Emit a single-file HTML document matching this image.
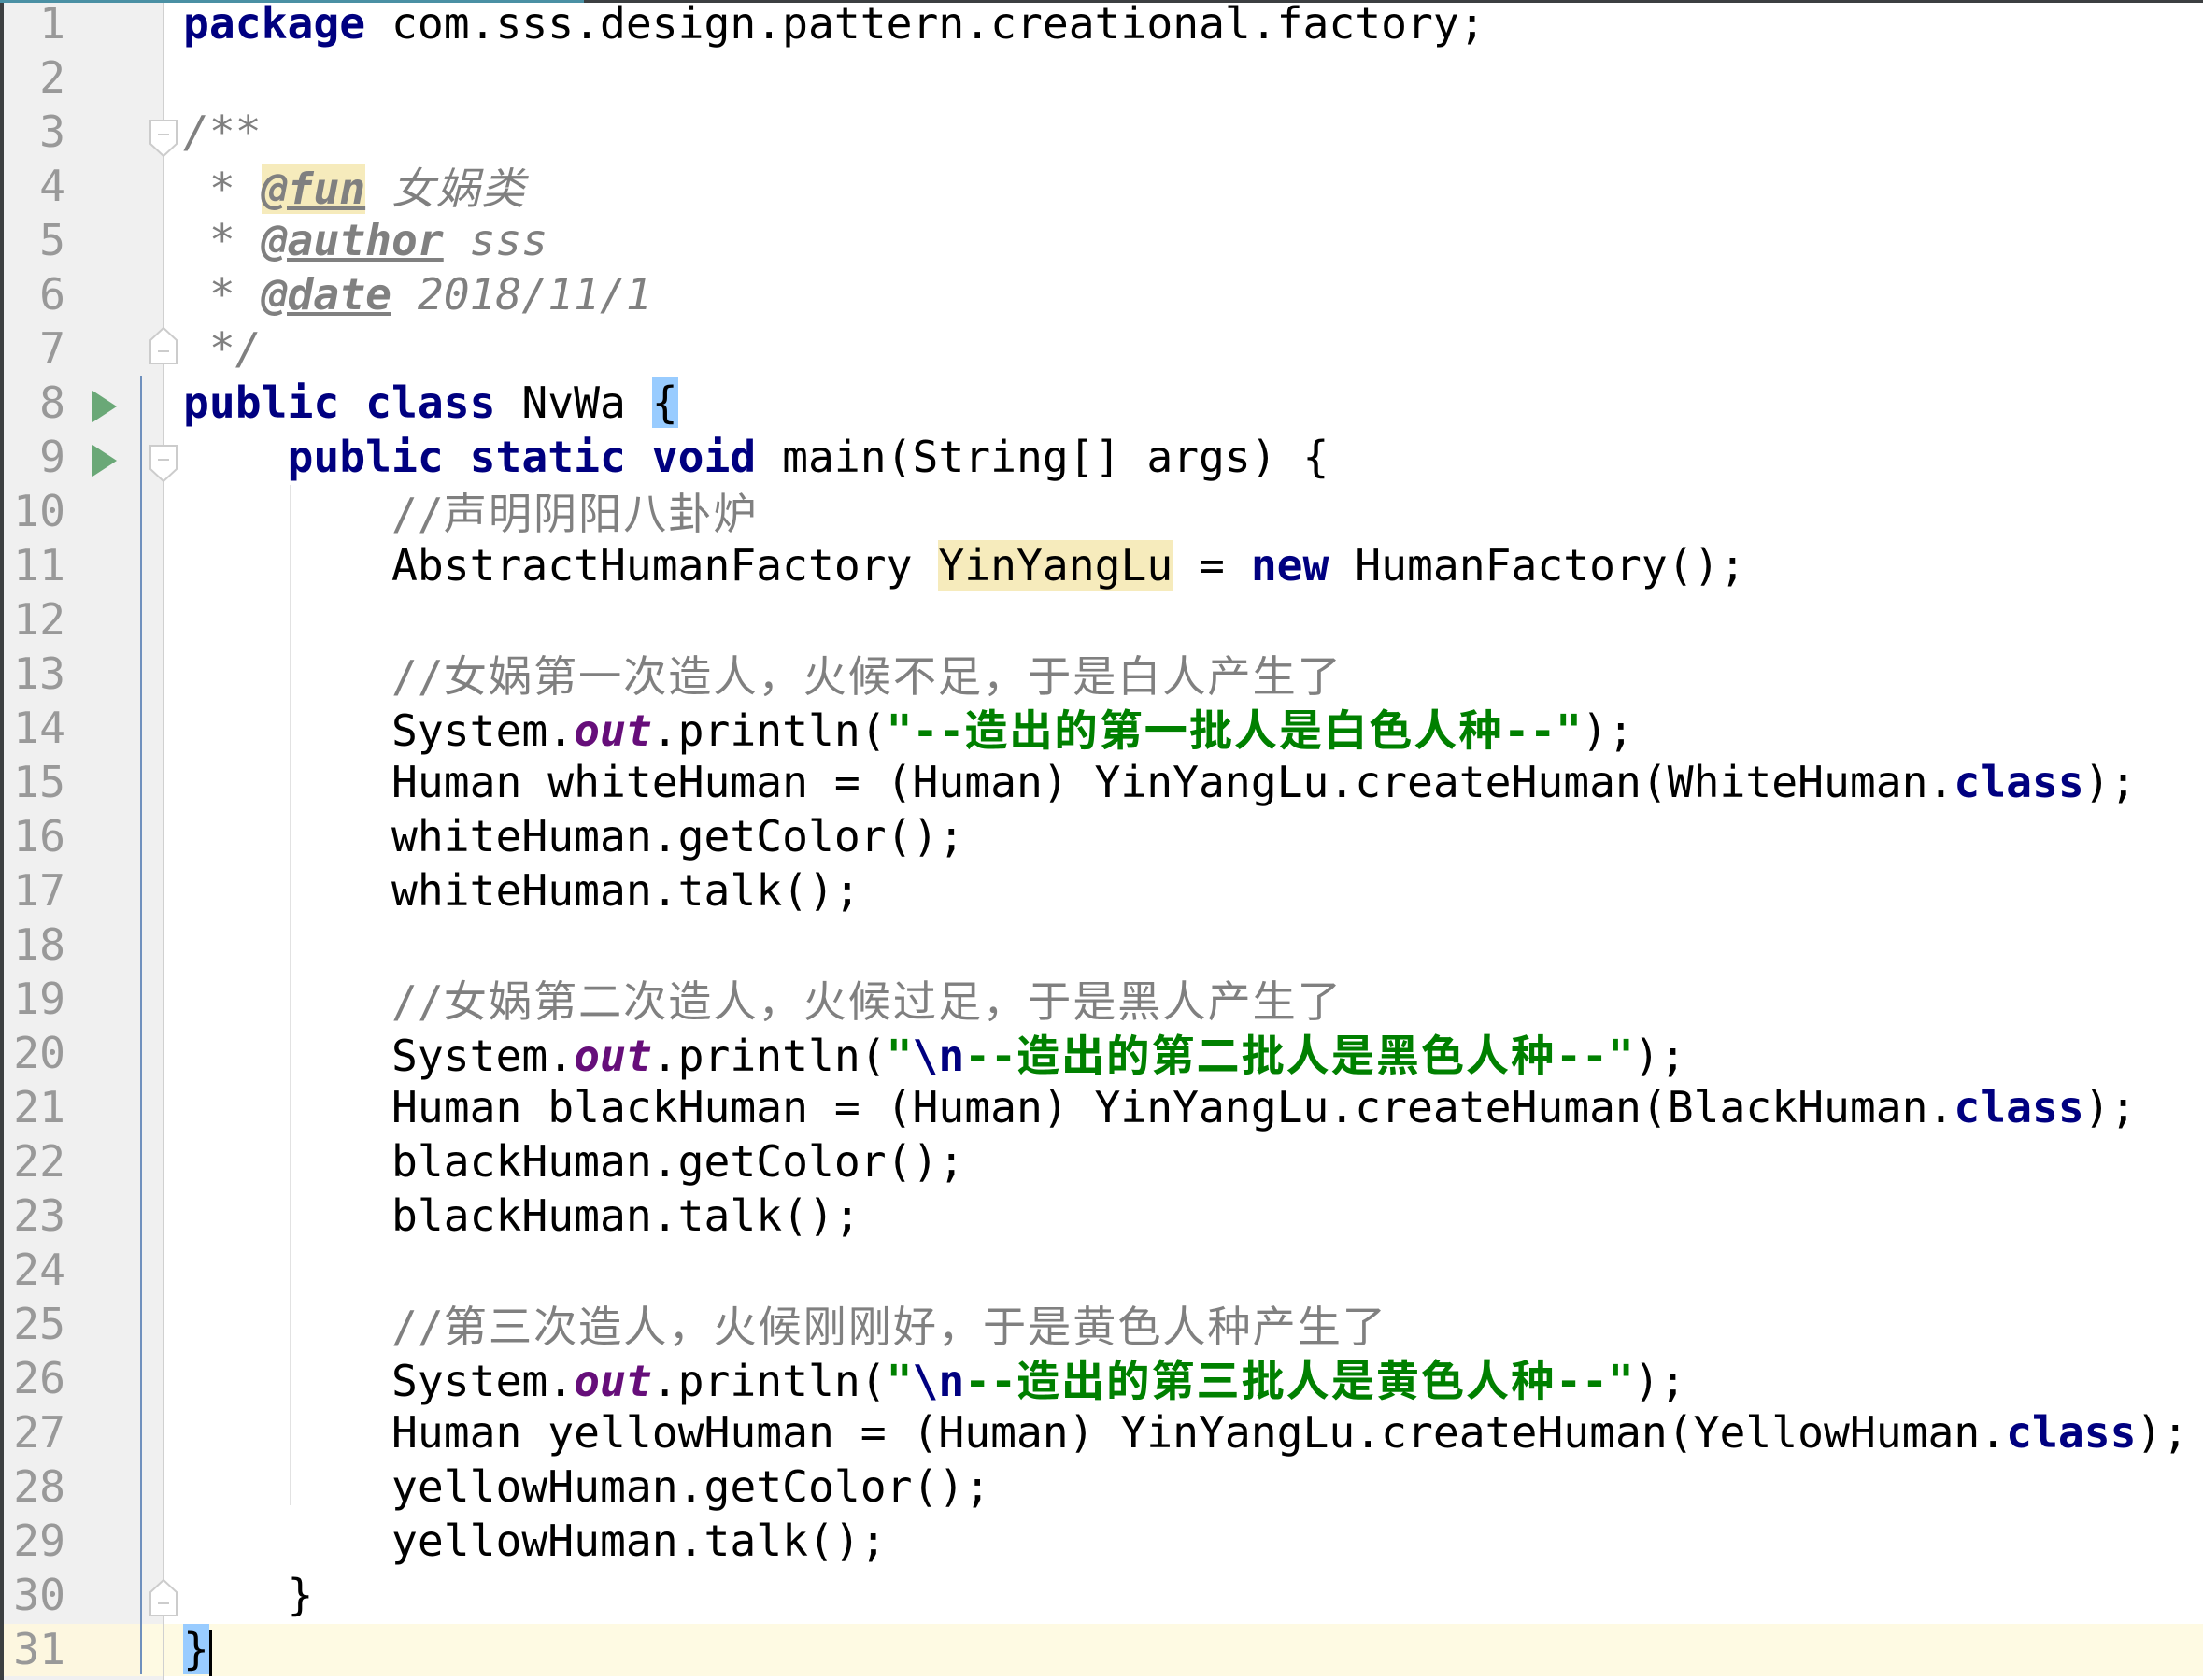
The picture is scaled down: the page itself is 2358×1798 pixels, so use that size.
<!DOCTYPE html>
<html><head><meta charset="utf-8">
<style>
html,body{margin:0;padding:0;}
body{width:2358px;height:1798px;overflow:hidden;background:#fff;position:relative;font-family:"DejaVu Sans Mono","Liberation Mono","Noto Sans CJK SC",monospace;font-size:46.3px;color:#000;}
#gut{position:absolute;left:0;top:0;width:175px;height:1798px;background:#f0f0f0;}
#dark{position:absolute;left:0;top:0;width:4px;height:1798px;background:#3c3f41;}
#gline{position:absolute;left:174px;top:0;width:2px;height:1798px;background:#d0d0d0;}
#blue{position:absolute;left:150px;top:402px;width:2px;height:1390px;background:#6f90bd;}
#top{position:absolute;left:0;top:0;width:2358px;height:3px;background:#3c3f41;}
#top2{position:absolute;left:0;top:0;width:625px;height:3px;background:#4a90a4;}
#cur{position:absolute;left:4px;top:1738px;width:2354px;height:56px;background:#fefae3;}
#curg{position:absolute;left:4px;top:1738px;width:146px;height:56px;background:#fdf7e0;}
.guide{position:absolute;left:310px;top:519px;width:2px;height:1092px;background:#e2e2e2;}
.ln{position:absolute;left:0;width:70px;text-align:right;color:#999;height:58px;line-height:58px;margin-top:-4px;}
.row{position:absolute;left:196px;height:58px;line-height:58px;white-space:pre;margin-top:-4px;}
.k{color:#000080;font-weight:bold;}
.c{color:#808080;}
.d{color:#808080;font-style:italic;}
.t{color:#808080;font-style:italic;font-weight:bold;text-decoration:underline;}
.s{color:#008000;font-weight:bold;}
.o{color:#660e7a;font-style:italic;font-weight:bold;}
.z{font-family:"Noto Sans CJK SC",sans-serif;letter-spacing:1.8px;}
.hl{background:#f6ebbc;}
.br{background:#99ccff;}
.run{position:absolute;left:99px;width:0;height:0;border-top:17px solid transparent;border-bottom:17px solid transparent;border-left:26px solid #6aa877;}
.fold{position:absolute;left:160px;}
</style></head><body>
<div id="gut"></div>
<div id="cur"></div>
<div id="curg"></div>
<div id="dark"></div>
<div id="gline"></div>
<div id="blue"></div>
<div class="guide"></div>
<div id="top"></div><div id="top2"></div>

<div class="ln" style="top:0">1</div>
<div class="ln" style="top:58px">2</div>
<div class="ln" style="top:116px">3</div>
<div class="ln" style="top:174px">4</div>
<div class="ln" style="top:232px">5</div>
<div class="ln" style="top:290px">6</div>
<div class="ln" style="top:348px">7</div>
<div class="ln" style="top:406px">8</div>
<div class="ln" style="top:464px">9</div>
<div class="ln" style="top:522px">10</div>
<div class="ln" style="top:580px">11</div>
<div class="ln" style="top:638px">12</div>
<div class="ln" style="top:696px">13</div>
<div class="ln" style="top:754px">14</div>
<div class="ln" style="top:812px">15</div>
<div class="ln" style="top:870px">16</div>
<div class="ln" style="top:928px">17</div>
<div class="ln" style="top:986px">18</div>
<div class="ln" style="top:1044px">19</div>
<div class="ln" style="top:1102px">20</div>
<div class="ln" style="top:1160px">21</div>
<div class="ln" style="top:1218px">22</div>
<div class="ln" style="top:1276px">23</div>
<div class="ln" style="top:1334px">24</div>
<div class="ln" style="top:1392px">25</div>
<div class="ln" style="top:1450px">26</div>
<div class="ln" style="top:1508px">27</div>
<div class="ln" style="top:1566px">28</div>
<div class="ln" style="top:1624px">29</div>
<div class="ln" style="top:1682px">30</div>
<div class="ln" style="top:1740px">31</div>

<div class="run" style="top:418px"></div>
<div class="run" style="top:476px"></div>

<svg class="fold" style="top:128px" width="30" height="40" viewBox="0 0 30 40"><path d="M1 1H29V26L15 39L1 26Z" fill="#fff" stroke="#ccc" stroke-width="2"/><path d="M9 16H21" stroke="#ccc" stroke-width="2"/></svg>
<svg class="fold" style="top:350px" width="30" height="40" viewBox="0 0 30 40"><path d="M1 39H29V14L15 1L1 14Z" fill="#fff" stroke="#ccc" stroke-width="2"/><path d="M9 26H21" stroke="#ccc" stroke-width="2"/></svg>
<svg class="fold" style="top:476px" width="30" height="40" viewBox="0 0 30 40"><path d="M1 1H29V26L15 39L1 26Z" fill="#fff" stroke="#ccc" stroke-width="2"/><path d="M9 16H21" stroke="#ccc" stroke-width="2"/></svg>
<svg class="fold" style="top:1690px" width="30" height="40" viewBox="0 0 30 40"><path d="M1 39H29V14L15 1L1 14Z" fill="#fff" stroke="#ccc" stroke-width="2"/><path d="M9 26H21" stroke="#ccc" stroke-width="2"/></svg>

<div class="row" style="top:0"><span class="k">package</span> com.sss.design.pattern.creational.factory;</div>
<div class="row" style="top:116px"><span class="d">/**</span></div>
<div class="row" style="top:174px"><span class="d"> * </span><span class="t hl">@fun</span><span class="d"> <span class="z">女娲类</span></span></div>
<div class="row" style="top:232px"><span class="d"> * </span><span class="t">@author</span><span class="d"> sss</span></div>
<div class="row" style="top:290px"><span class="d"> * </span><span class="t">@date</span><span class="d"> 2018/11/1</span></div>
<div class="row" style="top:348px"><span class="d"> */</span></div>
<div class="row" style="top:406px"><span class="k">public class</span> NvWa <span class="br">{</span></div>
<div class="row" style="top:464px">    <span class="k">public static void</span> main(String[] args) {</div>
<div class="row" style="top:522px">        <span class="c">//<span class="z">声明阴阳八卦炉</span></span></div>
<div class="row" style="top:580px">        AbstractHumanFactory <span class="hl">YinYangLu</span> = <span class="k">new</span> HumanFactory();</div>
<div class="row" style="top:696px">        <span class="c">//<span class="z">女娲第一次造人，火候不足，于是白人产生了</span></span></div>
<div class="row" style="top:754px">        System.<span class="o">out</span>.println(<span class="s">"--<span class="z">造出的第一批人是白色人种</span>--"</span>);</div>
<div class="row" style="top:812px">        Human whiteHuman = (Human) YinYangLu.createHuman(WhiteHuman.<span class="k">class</span>);</div>
<div class="row" style="top:870px">        whiteHuman.getColor();</div>
<div class="row" style="top:928px">        whiteHuman.talk();</div>
<div class="row" style="top:1044px">        <span class="c">//<span class="z">女娲第二次造人，火候过足，于是黑人产生了</span></span></div>
<div class="row" style="top:1102px">        System.<span class="o">out</span>.println(<span class="s"><span>"</span><span class="k">\n</span>--<span class="z">造出的第二批人是黑色人种</span>--"</span>);</div>
<div class="row" style="top:1160px">        Human blackHuman = (Human) YinYangLu.createHuman(BlackHuman.<span class="k">class</span>);</div>
<div class="row" style="top:1218px">        blackHuman.getColor();</div>
<div class="row" style="top:1276px">        blackHuman.talk();</div>
<div class="row" style="top:1392px">        <span class="c">//<span class="z">第三次造人，火候刚刚好，于是黄色人种产生了</span></span></div>
<div class="row" style="top:1450px">        System.<span class="o">out</span>.println(<span class="s"><span>"</span><span class="k">\n</span>--<span class="z">造出的第三批人是黄色人种</span>--"</span>);</div>
<div class="row" style="top:1508px">        Human yellowHuman = (Human) YinYangLu.createHuman(YellowHuman.<span class="k">class</span>);</div>
<div class="row" style="top:1566px">        yellowHuman.getColor();</div>
<div class="row" style="top:1624px">        yellowHuman.talk();</div>
<div class="row" style="top:1682px">    }</div>
<div class="row" style="top:1740px"><span class="br">}</span><span style="display:inline-block;width:3px;height:50px;background:#000;vertical-align:middle;"></span></div>
</body></html>
